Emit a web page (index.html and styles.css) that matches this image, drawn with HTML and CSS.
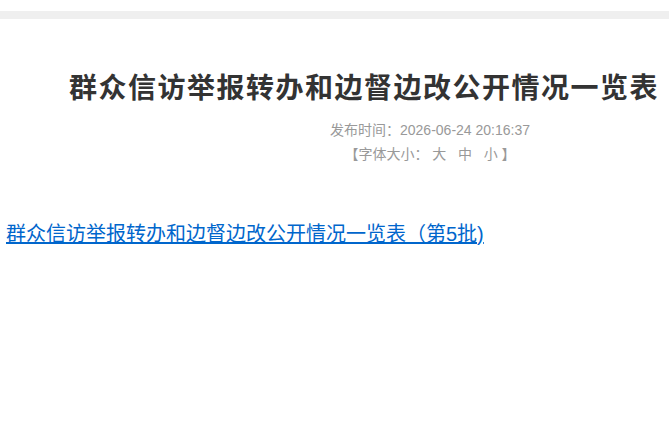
FILE: index.html
```
<!DOCTYPE html>
<html lang="zh-CN">
<head>
    <meta charset="UTF-8">
    <meta name="viewport" content="width=device-width, initial-scale=1.0">
    <title>群众信访举报转办和边督边改公开情况一览表</title>
    <link rel="stylesheet" href="styles.css">
</head>
<body>
    <!-- top strip -->
    <div class="top-bar"></div>

    <div class="article">
        <h1 class="article-title">群众信访举报转办和边督边改公开情况一览表</h1>
        <div class="article-info">
            <p class="pub-time">发布时间：2026-06-24 20:16:37</p>
            <p class="font-size">【字体大小：&nbsp;<a href="#">大</a>&nbsp;&nbsp;&nbsp;<a href="#">中</a>&nbsp;&nbsp;&nbsp;<a href="#">小</a>&nbsp;】</p>
        </div>

        <div class="article-body">
            <a href="#" class="doc-link">群众信访举报转办和边督边改公开情况一览表（第5批)</a>
        </div>
    </div>
</body>
</html>
```

FILE: styles.css
```
/* Page */
body {
    margin: 0;
    background-color: #fff;
    font-family: "Liberation Sans", Arial, "Noto Sans CJK SC", sans-serif;
    overflow-x: hidden;
}

.top-bar {
    margin-top: 11px;
    height: 8px;
    background-color: #efefef;
}

.article {
    width: 669px;
}

.article-title {
    margin: 47px 0 0 0;
    padding-left: 69px;
    font-size: 28px;
    line-height: 40px;
    font-weight: bold;
    color: #333;
    white-space: nowrap;
    font-family: "Noto Sans CJK SC", sans-serif;
    letter-spacing: 1.5px;
}

/* publish time and font switch */
.article-info {
    margin-top: 12px;
    padding-left: 191px;
    text-align: center;
    color: #999;
    font-size: 14px;
}

.article-info p {
    margin: 0;
    line-height: 24px;
}

.font-size a {
    color: #999;
    text-decoration: none;
}

.article-body {
    margin-top: 52px;
    padding-left: 6px;
}

.doc-link {
    font-size: 20px;
    color: #0066cc;
    text-decoration: underline;
}
```
